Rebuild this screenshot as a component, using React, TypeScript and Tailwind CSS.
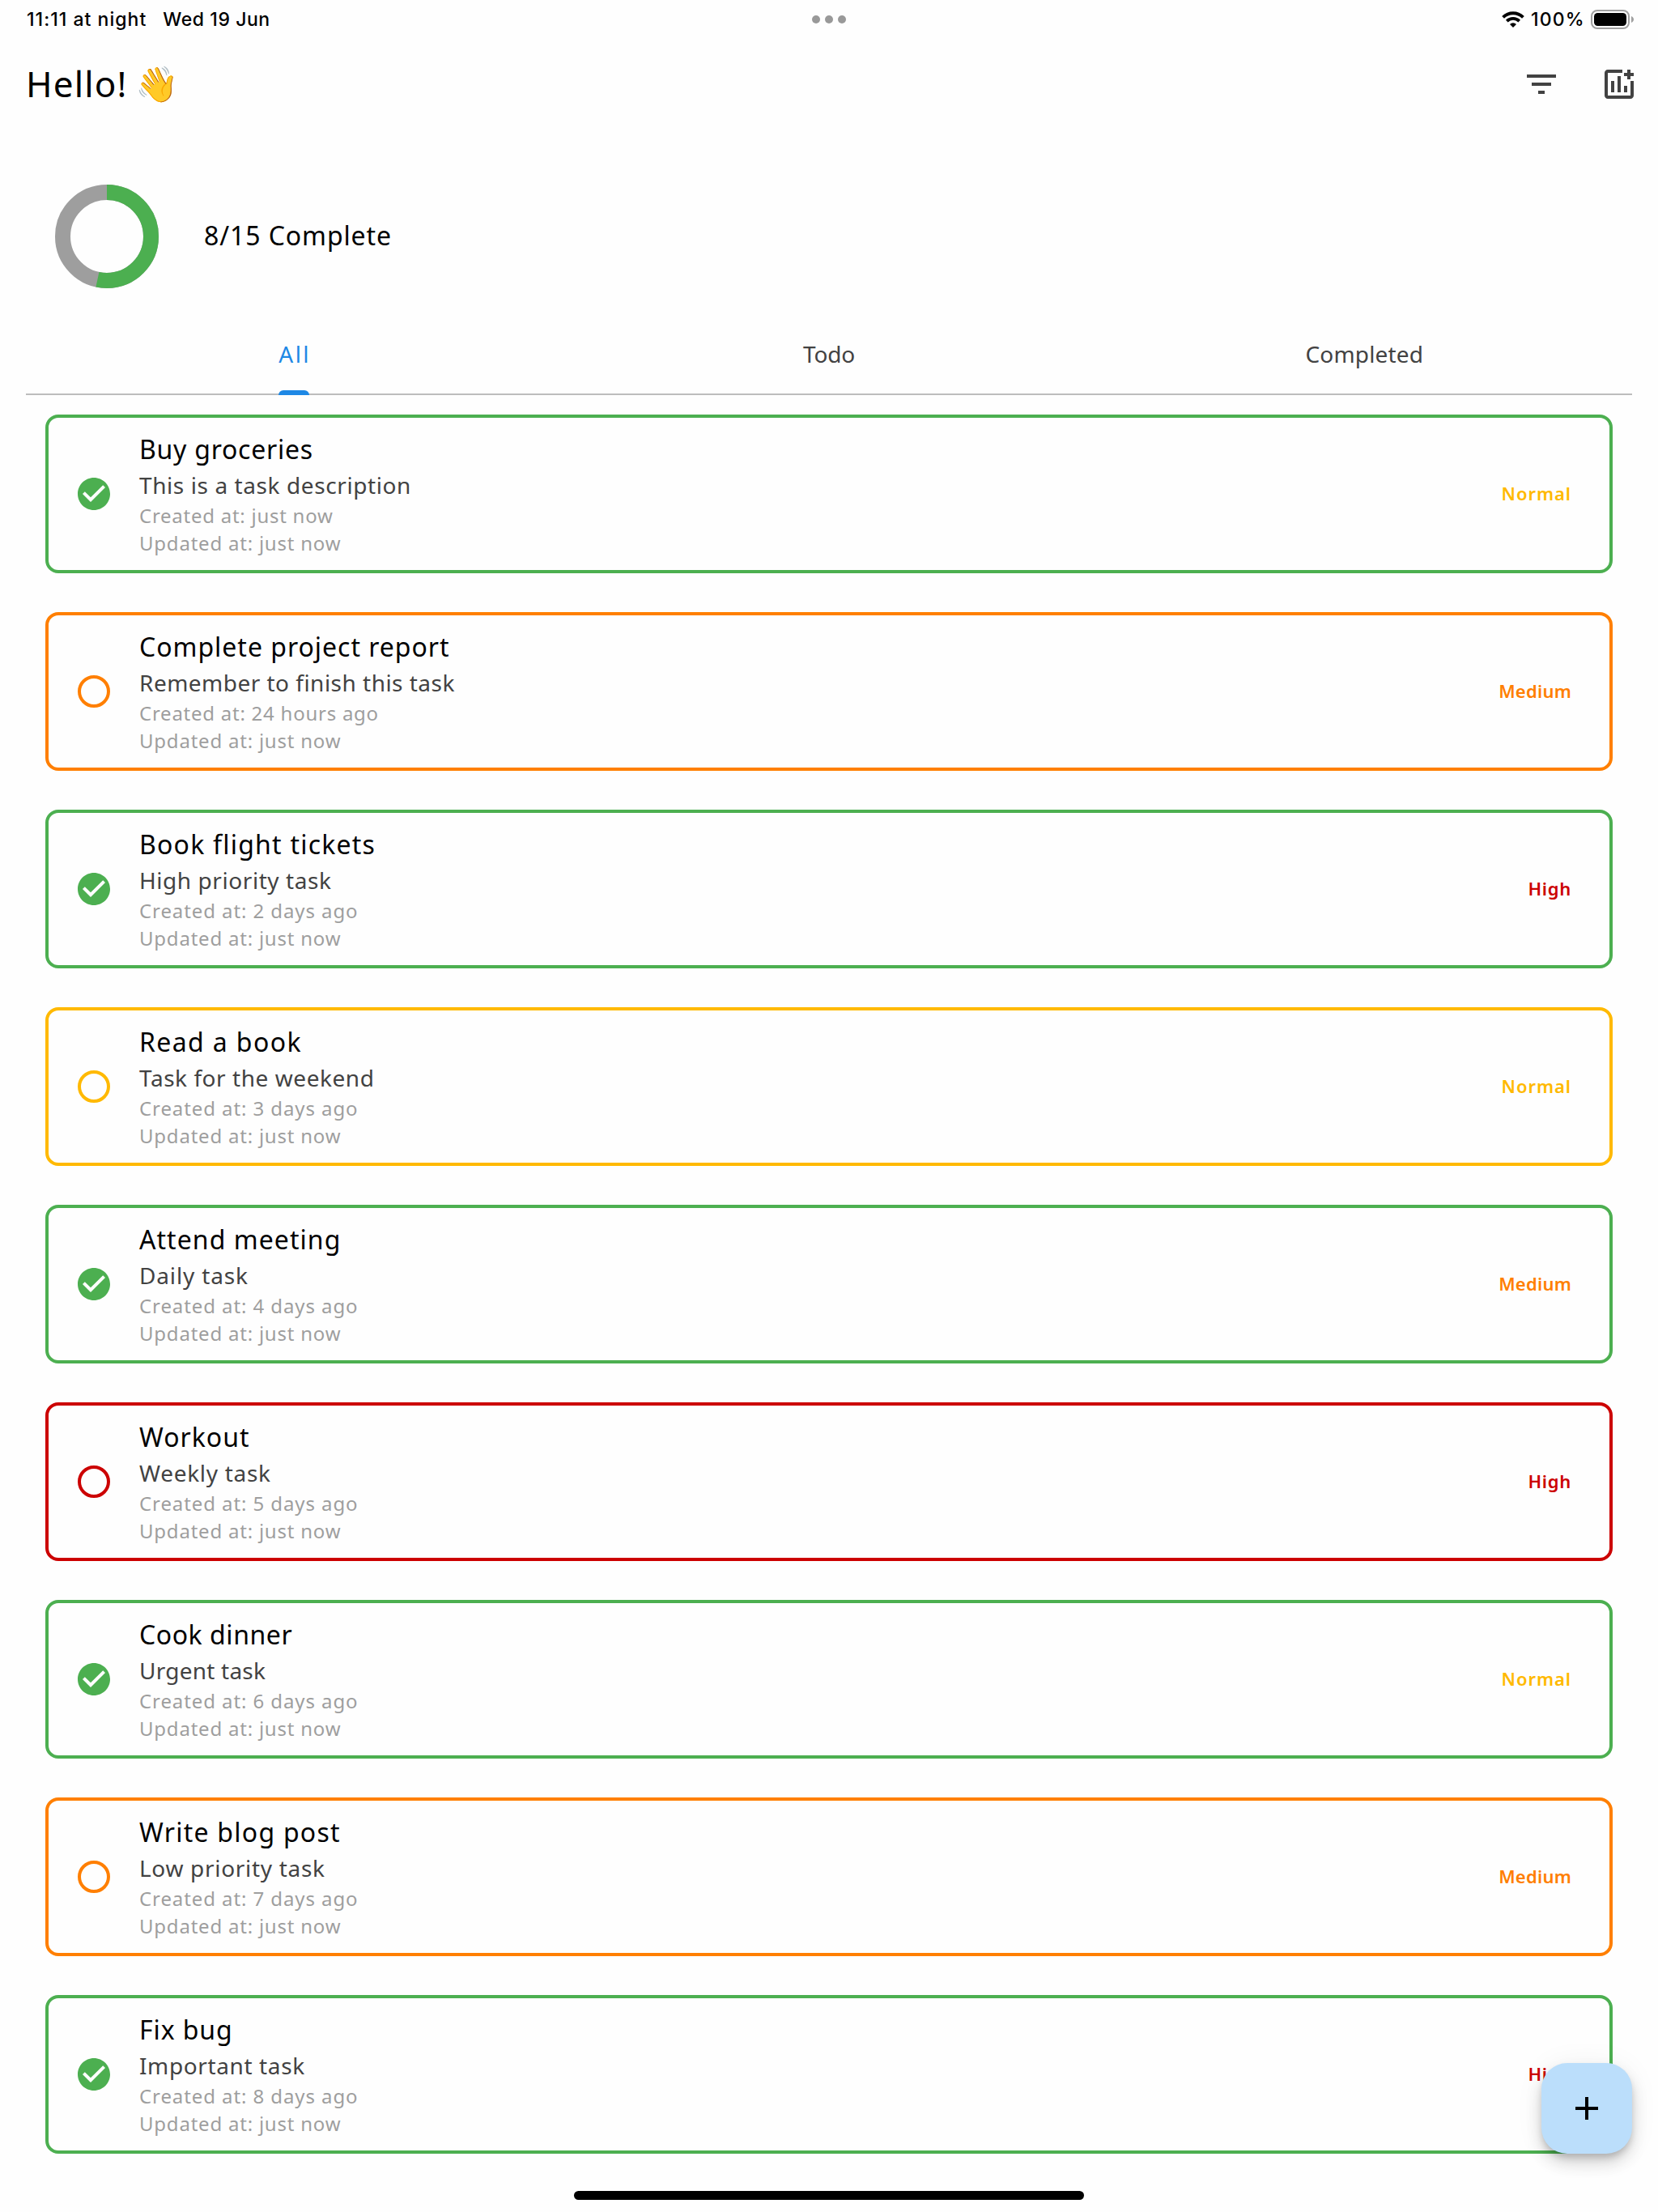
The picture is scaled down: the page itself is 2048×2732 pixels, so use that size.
type Priority = "Normal" | "Medium" | "High";

interface Task {
  title: string;
  titleTracking: string;
  description: string;
  descriptionTracking: string;
  created: string;
  createdTracking: string;
  priority: Priority;
  done: boolean;
}

const tasks: Task[] = [
  { title: "Buy groceries", titleTracking: "tracking-[0.75px]", description: "This is a task description", descriptionTracking: "tracking-[0.59px]", created: "just now", createdTracking: "tracking-[0.74px]", priority: "Normal", done: true },
  { title: "Complete project report", titleTracking: "tracking-[0.98px]", description: "Remember to finish this task", descriptionTracking: "tracking-[0.48px]", created: "24 hours ago", createdTracking: "tracking-[0.75px]", priority: "Medium", done: false },
  { title: "Book flight tickets", titleTracking: "tracking-[1.22px]", description: "High priority task", descriptionTracking: "tracking-[0.56px]", created: "2 days ago", createdTracking: "tracking-[0.91px]", priority: "High", done: true },
  { title: "Read a book", titleTracking: "tracking-[1.38px]", description: "Task for the weekend", descriptionTracking: "tracking-[0.55px]", created: "3 days ago", createdTracking: "tracking-[0.91px]", priority: "Normal", done: false },
  { title: "Attend meeting", titleTracking: "tracking-[1.05px]", description: "Daily task", descriptionTracking: "tracking-[0.85px]", created: "4 days ago", createdTracking: "tracking-[0.91px]", priority: "Medium", done: true },
  { title: "Workout", titleTracking: "tracking-[1.01px]", description: "Weekly task", descriptionTracking: "tracking-[0.7px]", created: "5 days ago", createdTracking: "tracking-[0.91px]", priority: "High", done: false },
  { title: "Cook dinner", titleTracking: "tracking-[0.55px]", description: "Urgent task", descriptionTracking: "tracking-[0.23px]", created: "6 days ago", createdTracking: "tracking-[0.91px]", priority: "Normal", done: true },
  { title: "Write blog post", titleTracking: "tracking-[1.25px]", description: "Low priority task", descriptionTracking: "tracking-[0.69px]", created: "7 days ago", createdTracking: "tracking-[0.91px]", priority: "Medium", done: false },
  { title: "Fix bug", titleTracking: "tracking-[0.9px]", description: "Important task", descriptionTracking: "tracking-[0.62px]", created: "8 days ago", createdTracking: "tracking-[0.91px]", priority: "High", done: true },
];

const priorityText: Record<Priority, string> = {
  Normal: "text-[#ffb900] tracking-[0.95px]",
  Medium: "text-[#ff7f00] tracking-[0.23px]",
  High: "text-[#cc0000] tracking-[0.7px]",
};

const priorityBorder: Record<Priority, string> = {
  Normal: "border-[#ffb900]",
  Medium: "border-[#ff7f00]",
  High: "border-[#cc0000]",
};

function StatusBar() {
  return (
    <div className="grid h-12 grid-cols-3 items-center font-['Inter',sans-serif] text-[23px] leading-[28px] font-medium text-black">
      <div className="flex gap-5 pl-[33px]">
        <span className="tracking-[1.03px]">11:11 at night</span>
        <span className="tracking-[0.56px]">Wed 19 Jun</span>
      </div>
      <div className="flex justify-center gap-1.5">
        <span className="size-2.5 rounded-full bg-[#999999]" />
        <span className="size-2.5 rounded-full bg-[#999999]" />
        <span className="size-2.5 rounded-full bg-[#999999]" />
      </div>
      <div className="flex items-center justify-end pr-[30px]">
        <svg className="h-5 w-7" viewBox="0 0 28 20" fill="none">
          <path d="M1.6 7.3a17.6 17.6 0 0 1 24.8 0" stroke="black" strokeWidth="3.9" />
          <path d="M6.3 12.1a11 11 0 0 1 15.4 0" stroke="black" strokeWidth="3.8" />
          <path d="M14 20l-4-4.1a5.7 5.7 0 0 1 8 0z" fill="black" />
        </svg>
        <span className="ml-2 w-[74px] tracking-[1.15px]">100%</span>
        <svg className="h-6 w-[53px]" viewBox="0 0 53 24">
          <rect x="1" y="1" width="46" height="22" rx="7" fill="none" stroke="#a0a0a0" strokeWidth="2" />
          <rect x="4" y="4" width="40" height="16" rx="4.5" fill="black" />
          <path d="M50 8c2 .8 3 2.300 3 4s-1 3.200-3 4z" fill="#a0a0a0" />
        </svg>
      </div>
    </div>
  );
}

function Header() {
  return (
    <header className="flex h-28 items-center justify-between pr-6 pl-8">
      <h1 className="flex pb-[3px] text-[44px] leading-[60px] text-black">
        <span className="w-[135px] tracking-[1.15px]">Hello!</span>
        <span className="text-[43px]">👋</span>
      </h1>
      <div className="flex gap-12 text-[#424242]">
        <svg className="size-12" viewBox="0 0 24 24" fill="currentColor">
          <path d="M10 18h4v-2h-4v2zM3 6v2h18V6H3zm3 7h12v-2H6v2z" />
        </svg>
        <svg className="size-12" viewBox="0 0 24 24" fill="currentColor">
          <path d="M19 10v9H5V5h9V3H5c-1.100 0-2 .9-2 2v14c0 1.100.9 2 2 2h14c1.100 0 2-.9 2-2v-9h-2zM7 10h2v7H7zM11 7h2v10h-2zM15 13h2v4h-2zM17 3h2v2h2v2h-2v2h-2V7h-2V5h2z" />
        </svg>
      </div>
    </header>
  );
}

function Progress({ done, total }: { done: number; total: number }) {
  const circumference = 2 * Math.PI * 54.5;
  return (
    <section className="flex h-[264px] items-center pl-[68px]">
      <svg className="size-32 -rotate-90" viewBox="0 0 128 128" fill="none" strokeWidth="19">
        <circle cx="64" cy="64" r="54.5" stroke="#9e9e9e" />
        <circle
          cx="64"
          cy="64"
          r="54.5"
          stroke="#4caf50"
          strokeDasharray={`${(circumference * done) / total} ${circumference}`}
        />
      </svg>
      <p className="ml-14 pb-0.5 text-[32px] leading-[48px] tracking-[0.9px] text-black">
        {done}/{total} Complete
      </p>
    </section>
  );
}

function Tabs() {
  return (
    <nav className="mx-8 -mt-[7px] grid h-[71px] grid-cols-3 border-b-2 border-[#bdbdbd] text-[28px] leading-10 text-[#424242]">
      <button className="flex flex-col items-center text-[#1e88e5]">
        <span className="mr-[-3px] tracking-[2.5px]">All</span>
        <span className="mt-auto mb-[-2px] h-1.5 w-[38px] rounded-t-md bg-[#1e88e5]" />
      </button>
      <button className="flex justify-center">
        <span className="tracking-[-0.2px]">Todo</span>
      </button>
      <button className="flex justify-center">
        <span className="tracking-[0.19px]">Completed</span>
      </button>
    </nav>
  );
}

function StateIcon({ task }: { task: Task }) {
  if (task.done) {
    return (
      <svg className="size-12 text-[#4caf50]" viewBox="0 0 24 24" fill="currentColor">
        <path d="M12 2C6.480 2 2 6.480 2 12s4.480 10 10 10 10-4.480 10-10S17.520 2 12 2zm-2 15l-5-5 1.410-1.410L10 14.170l7.590-7.590L19 8l-9 9z" />
      </svg>
    );
  }
  return (
    <svg className={`size-12 ${priorityText[task.priority]}`} viewBox="0 0 24 24" fill="none">
      <circle cx="12" cy="12" r="9" stroke="currentColor" strokeWidth="2" />
    </svg>
  );
}

function TaskCard({ task }: { task: Task }) {
  return (
    <li
      className={`flex h-[196px] items-center rounded-2xl border-4 pr-[47px] pl-8 ${
        task.done ? "border-[#4caf50]" : priorityBorder[task.priority]
      }`}
    >
      <StateIcon task={task} />
      <div className="ml-8 h-40 flex-1">
        <h2 className={`text-[32px] leading-[49px] text-black ${task.titleTracking}`}>{task.title}</h2>
        <p className={`text-[28px] leading-[41px] text-[#424242] ${task.descriptionTracking}`}>{task.description}</p>
        <p className={`text-2xl leading-[34px] text-[#9e9e9e] ${task.createdTracking}`}>Created at: {task.created}</p>
        <p className="text-2xl leading-[34px] tracking-[0.78px] text-[#9e9e9e]">Updated at: just now</p>
      </div>
      <span className={`pb-0.5 text-[22px] leading-8 font-semibold ${priorityText[task.priority]}`}>{task.priority}</span>
    </li>
  );
}

export default function App() {
  return (
    <div className="relative flex h-[2732px] w-[2048px] flex-col overflow-hidden bg-[#fefefe] font-['Noto_Sans',sans-serif]">
      <StatusBar />
      <Header />
      <Progress done={8} total={15} />
      <Tabs />
      <ul className="mx-14 mt-6 flex flex-col gap-12">
        {tasks.map((task) => (
          <TaskCard key={task.title} task={task} />
        ))}
      </ul>
      <button className="absolute right-8 bottom-18 flex size-28 items-center justify-center rounded-[32px] bg-[#bbdefb] shadow-[0_6px_10px_-2px_rgba(0,0,0,0.2),0_12px_20px_0_rgba(0,0,0,0.14),0_2px_36px_0_rgba(0,0,0,0.06)]">
        <svg className="size-12" viewBox="0 0 24 24" fill="black">
          <path d="M19 13h-6v6h-2v-6H5v-2h6V5h2v6h6v2z" />
        </svg>
      </button>
      <div className="absolute bottom-[15px] left-1/2 h-[11px] w-[630px] -translate-x-1/2 rounded-full bg-black" />
    </div>
  );
}
